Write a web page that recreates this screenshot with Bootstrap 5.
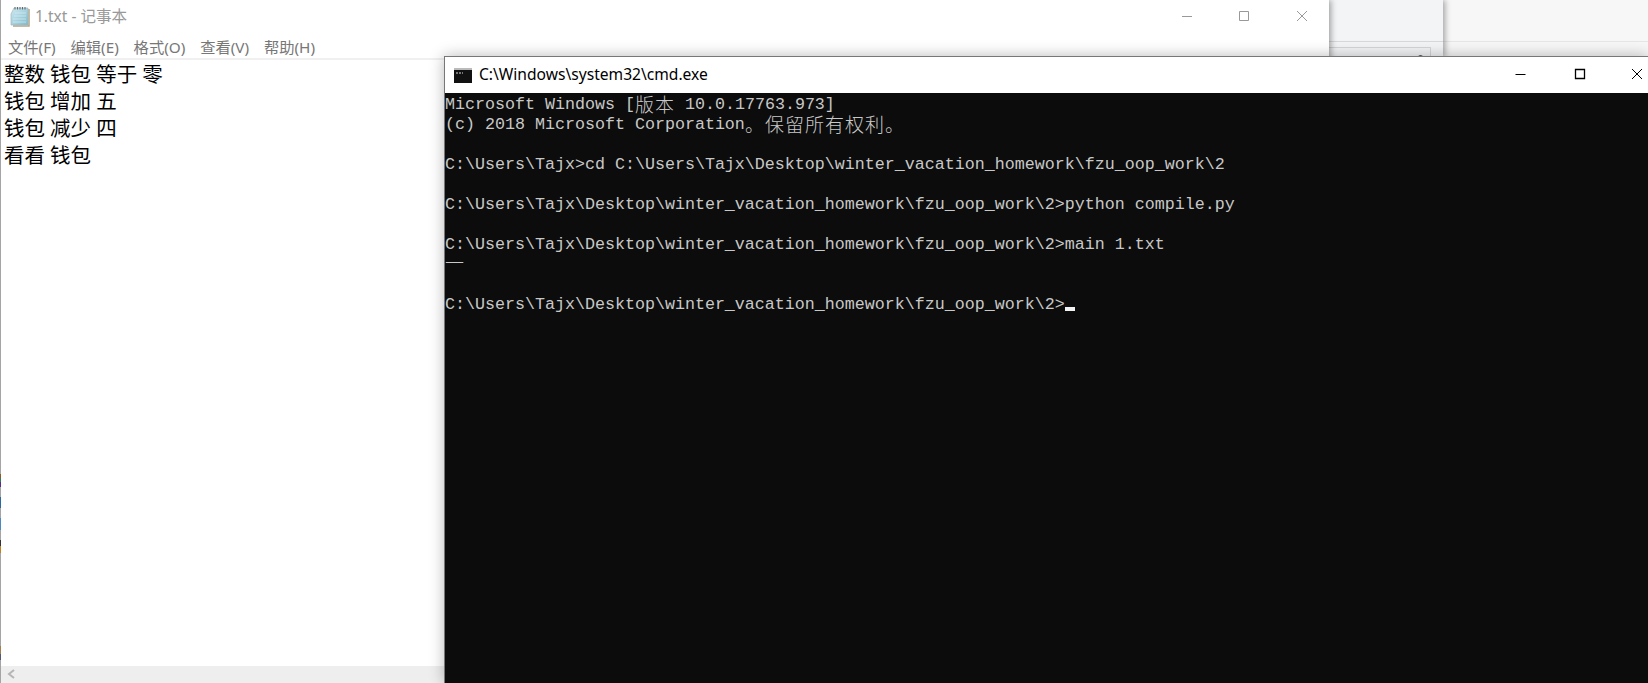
<!DOCTYPE html>
<html lang="zh">
<head>
<meta charset="utf-8">
<title>Desktop</title>
<link href="https://cdn.jsdelivr.net/npm/bootstrap@5.3.0/dist/css/bootstrap.min.css" rel="stylesheet">
<style>
html,body{width:1648px;height:683px;overflow:hidden;margin:0}
body{background:#f7f7f7;position:relative;font-family:"Noto Sans","Noto Sans CJK SC",sans-serif}
.win{position:absolute;overflow:hidden}
.back-far{left:1443px;top:0;width:205px;height:57px;background:#f7f7f7}
.back-far .rule{height:42px;border-bottom:1px solid #e6e6e6}
.back-mid{left:1329px;top:0;width:114px;height:57px;background:#f3f4f6;box-shadow:2px 0 6px rgba(0,0,0,.35)}
.back-mid .rule{height:42px;border-bottom:1px solid #d8d8d8}
.back-box{position:absolute;left:0;top:47px;width:102px;height:12px;border:1px solid #d5d5d5;border-left:0}
.back-dot{position:absolute;left:89px;top:55px;width:5px;height:3px;background:#555;border-radius:3px 3px 0 0}
.note{left:0;top:0;width:1329px;height:683px;background:#fff;border-left:1px solid #a5a5a5;box-shadow:2px 0 6px rgba(0,0,0,.35);display:flex;flex-direction:column}
.note-title{height:32px;flex:none;color:#999;font-size:15.5px;padding:1px 0 0 9px}
.note-name{margin-left:5px}
.note-menu{height:28px;flex:none;border-bottom:2px solid #f0f0f0;font-size:15.3px;color:#777;padding:4px 0 0 7px;gap:14.8px}
.note-body{flex:1 1 auto;padding:0 0 0 3px;font:20.5px/27px "Noto Sans CJK SC",sans-serif;word-spacing:.5px;color:#000;white-space:pre}
.note-scroll{height:17px;flex:none;background:#eee}
.note-scroll svg{margin:3px 0 0 6px;display:block}
.note-caps{position:absolute;right:0;top:0;width:192px;height:32px}
.edge-marks{position:absolute;left:0;top:474px;width:1px;height:186px;background:linear-gradient(#8a5a2a 0 4px,#3a7a5a 4px 8px,#5a2a8a 8px 13px,transparent 13px 23px,#2a6aa0 23px 34px,transparent 34px 44px,#4a8ac0 44px 56px,transparent 56px 66px,#333 66px 72px,#c08020 72px 79px,transparent 79px 172px,#a08050 172px 180px,#557 180px 186px)}
.cmd{left:444px;top:56px;width:1204px;height:627px;background:#fff;border:1px solid #777;border-right:0;border-bottom:0;box-shadow:0 0 14px rgba(0,0,0,.28);display:flex;flex-direction:column}
.cmd-title{height:36px;flex:none;font-size:15.6px;color:#000;padding-left:9px;gap:7px}
.cmd-caps{position:absolute;right:0;top:0;height:36px;width:140px}
.cmd-body{flex:1 1 auto;background:#0c0c0c;color:#c8c8c8;font:16.67px/20px "Liberation Mono",monospace;white-space:pre;padding-top:2px;position:relative}
.cjk{font:300 19px/17px "Noto Sans CJK SC",sans-serif;letter-spacing:1px;vertical-align:top}
.cjk-dash{line-height:13px}
.cursor{display:inline-block;width:10px;height:4px;background:#f2f2f2;vertical-align:-2px}
.cmd-line{height:20px}
</style>
</head>
<body>
<div class="win back-far"><div class="rule"></div></div>
<div class="win back-mid"><div class="rule"></div><div class="back-box"></div><div class="back-dot"></div></div>

<section class="win note">
  <div class="note-title d-flex align-items-center">
    <svg width="20" height="21" viewBox="0 0 20 21" aria-hidden="true">
      <defs><linearGradient id="pad" x1="0" y1="0" x2="1" y2="1"><stop offset="0" stop-color="#cfe9f1"/><stop offset="1" stop-color="#7fbccd"/></linearGradient></defs>
      <path d="M19 3v17H3" fill="none" stroke="#b3a488" stroke-width="1.500"/>
      <path d="M4 2h14v17H1V8z" fill="url(#pad)" stroke="#9fb6bb" stroke-width=".7"/>
      <path d="M5 1v2.500M7.500 1v2.500M10 1v2.500M12.500 1v2.500M15 1v2.500" stroke="#666" stroke-width="1"/>
      <path d="M5 7h11M4 10h12M3 13h13M3 16h13" stroke="#e4f3f7" stroke-width=".6"/>
    </svg>
    <span class="note-name">1.txt - 记事本</span>
  </div>
  <div class="note-caps d-flex align-items-center justify-content-end">
    <svg width="170" height="32" viewBox="0 0 170 32" aria-hidden="true" fill="none" stroke="#999" stroke-width="1"><path d="M23 16.500h10"/><path d="M80.500 11.500h9v9h-9z"/><path d="M138 11l10 10M148 11l-10 10"/></svg>
  </div>
  <div class="note-menu d-flex align-items-center">
    <span>文件(F)</span><span>编辑(E)</span><span>格式(O)</span><span>查看(V)</span><span>帮助(H)</span>
  </div>
  <div class="note-body">整数 钱包 等于 零
钱包 增加 五
钱包 减少 四
看看 钱包</div>
  <div class="note-scroll">
    <svg width="8" height="10" viewBox="0 0 8 10" aria-hidden="true"><path d="M7 1L2 5l5 4" fill="none" stroke="#b5b5b5" stroke-width="2"/></svg>
  </div>
</section>
<div class="edge-marks"></div>

<section class="win cmd">
  <div class="cmd-title d-flex align-items-center">
    <svg width="18" height="15" viewBox="0 0 18 15" aria-hidden="true"><rect width="18" height="15" fill="#111"/><rect y="0" width="18" height="2" fill="#bbb"/><path d="M2 5h2M5 5h2M8 5h1" stroke="#ddd" stroke-width="1"/></svg>
    <span>C:\Windows\system32\cmd.exe</span>
  </div>
  <div class="cmd-caps">
    <svg width="140" height="36" viewBox="0 0 140 36" aria-hidden="true" fill="none" stroke="#000" stroke-width="1"><path d="M7.500 17.500h10"/><path d="M67.500 12.500h9v9h-9z" stroke-width="1.300"/><path d="M124 12l10 10M134 12l-10 10"/></svg>
  </div>
  <div class="cmd-body"><div class="cmd-line">Microsoft Windows [<span class="cjk">版本</span> 10.0.17763.973]</div><div class="cmd-line">(c) 2018 Microsoft Corporation<span class="cjk">。保留所有权利。</span></div><div class="cmd-line"></div><div class="cmd-line">C:\Users\Tajx&gt;cd C:\Users\Tajx\Desktop\winter_vacation_homework\fzu_oop_work\2</div><div class="cmd-line"></div><div class="cmd-line">C:\Users\Tajx\Desktop\winter_vacation_homework\fzu_oop_work\2&gt;python compile.py</div><div class="cmd-line"></div><div class="cmd-line">C:\Users\Tajx\Desktop\winter_vacation_homework\fzu_oop_work\2&gt;main 1.txt</div><div class="cmd-line"><span class="cjk cjk-dash">一</span></div><div class="cmd-line"></div><div class="cmd-line">C:\Users\Tajx\Desktop\winter_vacation_homework\fzu_oop_work\2&gt;<span class="cursor"></span></div></div>
</section>
<script src="https://cdn.jsdelivr.net/npm/bootstrap@5.3.0/dist/js/bootstrap.bundle.min.js"></script>
</body>
</html>
